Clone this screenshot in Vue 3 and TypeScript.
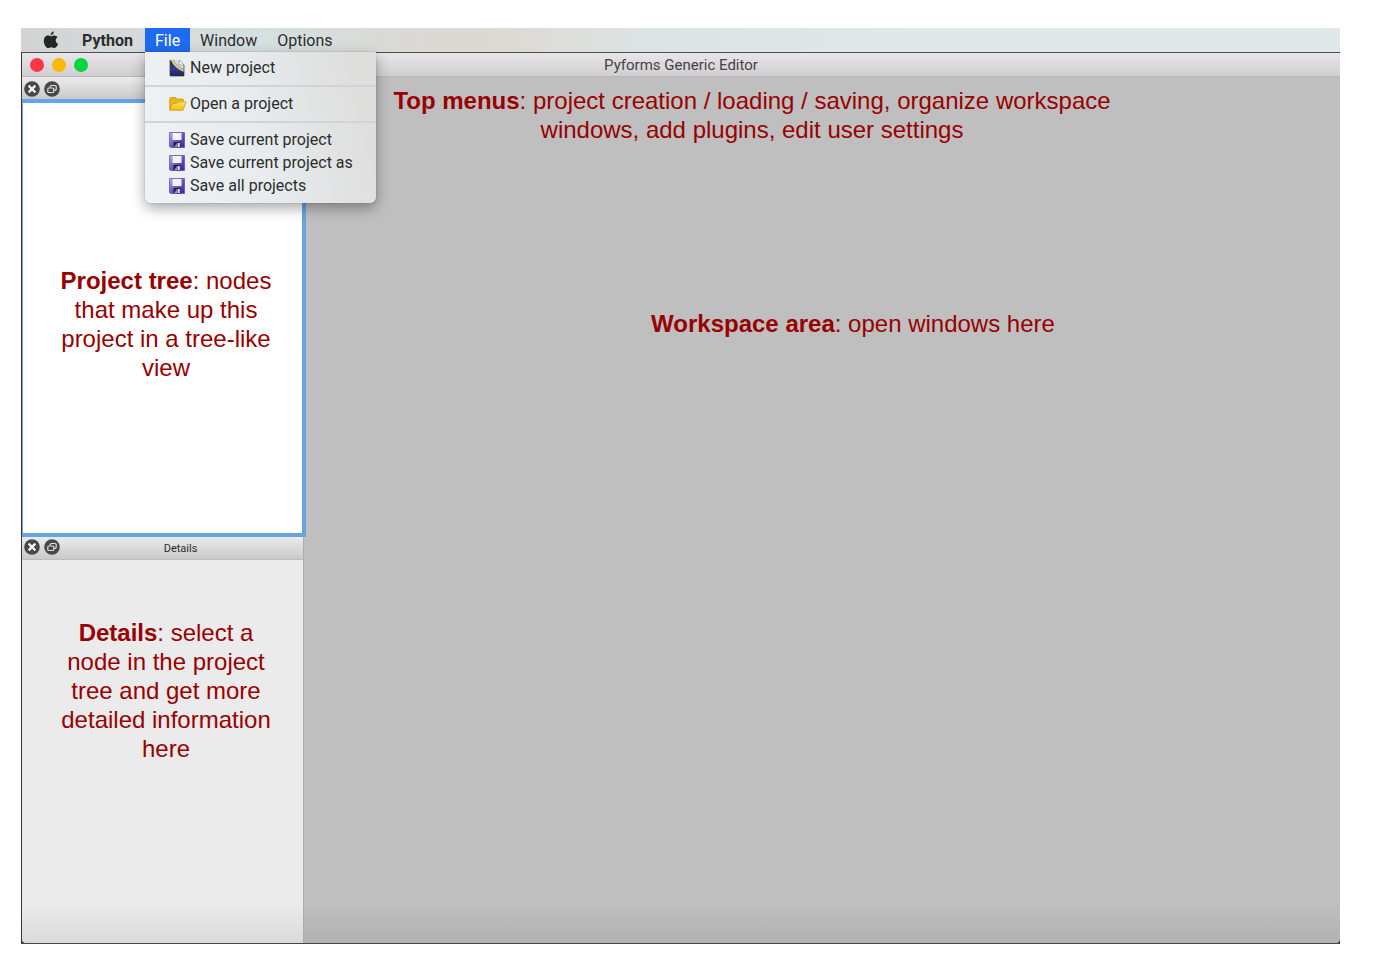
<script setup lang="ts">
import { ref } from 'vue'

type IconName = 'new' | 'open' | 'save'
interface MenuEntry { label: string; icon: IconName }

const menus: string[] = ['File', 'Window', 'Options']
const openMenu = ref<string>('File')
const groups: MenuEntry[][] = [
  [{ label: 'New project', icon: 'new' }],
  [{ label: 'Open a project', icon: 'open' }],
  [
    { label: 'Save current project', icon: 'save' },
    { label: 'Save current project as', icon: 'save' },
    { label: 'Save all projects', icon: 'save' },
  ],
]
const docks: string[] = ['tree', 'details']
</script>

<template>
  <div class="screen">
    <svg class="defs" aria-hidden="true">
      <defs>
        <linearGradient id="gNew" x1="0" y1="0" x2="0" y2="1"><stop offset="0" stop-color="#27304a" /><stop offset=".55" stop-color="#2d3a9c" /><stop offset="1" stop-color="#24243c" /></linearGradient>
        <linearGradient id="gFolder" x1="0" y1="0" x2="0" y2="1"><stop offset="0" stop-color="#ffe868" /><stop offset="1" stop-color="#f2b90f" /></linearGradient>
        <linearGradient id="gDisk" x1="0" y1="0" x2="1" y2="1"><stop offset="0" stop-color="#b9aef8" /><stop offset=".5" stop-color="#6a56cf" /><stop offset="1" stop-color="#35249c" /></linearGradient>
      </defs>
    </svg>

    <nav class="menubar">
      <button class="apple" aria-label="Apple menu">
        <svg width="16" height="18" viewBox="0 0 16 18"><path fill="#252727" d="M10.900 0.500c.1 1.900-1.500 3.700-3.300 3.600-.2-1.800 1.500-3.500 3.300-3.600zM8.100 5.300c.9 0 1.700-.8 3.200-.8 1.300 0 2.600.7 3.300 1.800-2.800 1.700-2.300 5.300.5 6.500-.6 1.700-2 4.200-3.500 4.200-1.200 0-1.700-.8-3.200-.8s-2 .8-3.200.8C3.100 17 .8 13.300.8 9.900c0-3.300 2-5.300 4.200-5.300 1.400 0 2.300.7 3.100.7z" /></svg>
      </button>
      <button class="app-name">Python</button>
      <div v-for="m in menus" :key="m" class="menu">
        <button :class="['menu-title', { active: openMenu === m }]" @click="openMenu = m">{{ m }}</button>
        <div v-if="m === 'File' && openMenu === 'File'" class="popup">
          <div v-for="(group, i) in groups" :key="i" class="group">
            <button v-for="e in group" :key="e.label" class="entry">
              <svg v-if="e.icon === 'new'" width="16" height="18" viewBox="0 0 16 18">
                <path d="M1 .5h10l4 5V17H1z" fill="#dededa" />
                <path d="M1 1.500h2c2 5 6 8.500 12 11V17H1z" fill="url(#gNew)" />
                <path d="M2.800 1c2 5 6 8.500 12.200 11" fill="none" stroke="#e5cf67" stroke-width="1.800" />
                <path d="M4.500 1c2 4 5 7 10.500 9.500" fill="none" stroke="#77786f" stroke-width=".7" />
                <path d="M10 1v5h5z" fill="#fafafa" stroke="#8d8d8d" stroke-width=".7" />
                <path d="M1 1v16h14V6" fill="none" stroke="#373943" stroke-width=".7" />
              </svg>
              <svg v-else-if="e.icon === 'open'" width="18" height="16" viewBox="0 0 18 16">
                <path d="M.7 14V2.500l1.500-1h4.500l1 1.500h6.500v4" fill="#edb719" stroke="#cf9112" stroke-width=".8" />
                <path d="M.8 14.300 3.500 7.500l4.500-.2 1-1.500h8l-3 8.500z" fill="url(#gFolder)" stroke="#d49a14" stroke-width=".8" />
              </svg>
              <svg v-else width="16" height="16" viewBox="0 0 16 16">
                <path d="M.5.5h15v15h-14l-1-1z" fill="url(#gDisk)" stroke="#594bb4" stroke-width=".7" />
                <path d="M3.500 1h9v7h-9z" fill="#f3f3fa" />
                <path d="M4.500 10h7v5.500h-7z" fill="#25243d" />
                <path d="M8.500 11h2.300v4H8.500z" fill="#dcdce7" />
                <path d="M5 15.500 8 11v4.500z" fill="#8e91a4" />
              </svg>
              <span>{{ e.label }}</span>
            </button>
          </div>
        </div>
      </div>
    </nav>

    <section class="window">
      <header class="titlebar">
        <div class="lights">
          <button class="light red" aria-label="Close"></button>
          <button class="light yellow" aria-label="Minimize"></button>
          <button class="light green" aria-label="Zoom"></button>
        </div>
        <h1>Pyforms Generic Editor</h1>
      </header>

      <div class="body">
        <aside class="sidebar">
          <section v-for="d in docks" :key="d" :class="['dock', d]">
            <header class="dock-head">
              <button class="dock-btn" aria-label="Close panel">
                <svg width="16" height="16" viewBox="0 0 16 16"><circle cx="8" cy="8" r="7.800" fill="#484848" /><path d="M5.500 5.500l5 5M10.500 5.500l-5 5" stroke="#f4f4f4" stroke-width="2.400" stroke-linecap="square" /></svg>
              </button>
              <button class="dock-btn" aria-label="Float panel">
                <svg width="16" height="16" viewBox="0 0 16 16"><circle cx="8" cy="8" r="7.800" fill="#484848" /><g fill="none" stroke="#dedede" stroke-width="1.200"><rect x="3.800" y="7" width="6" height="4.500" rx="1" /><path d="M6.200 6.500V5.300l1-.8h4l1 .8v3.200l-1 .9h-1" /></g></svg>
              </button>
              <h2 v-if="d === 'details'">Details</h2>
            </header>
            <div class="dock-body">
              <p v-if="d === 'tree'" class="note"><b>Project tree</b>: nodes that make up this project in a tree-like view</p>
              <p v-else class="note"><b>Details</b>: select a node in the project tree and get more detailed information here</p>
            </div>
          </section>
        </aside>
        <main class="workspace">
          <p class="note top-note"><b>Top menus</b>: project creation / loading / saving, organize workspace windows, add plugins, edit user settings</p>
          <p class="note area-note"><b>Workspace area</b>: open windows here</p>
        </main>
      </div>
    </section>
  </div>
</template>

<style>
body { background: #fff; }
</style>

<style scoped>
* { box-sizing: border-box; }
.screen {
  display: flex;
  flex-direction: column;
  min-height: 100vh;
  padding: 28px 36px 29px 21px;
  font-family: Roboto, "Liberation Sans", sans-serif;
  color: #2b2d2e;
}
.defs { position: absolute; width: 0; height: 0; }
button {
  margin: 0;
  padding: 0;
  border: 0;
  background: none;
  font: inherit;
  color: inherit;
}
.menubar {
  display: flex;
  height: 25px;
  padding-left: 22px;
  border-bottom: 1px solid #4b4e50;
  background: linear-gradient(90deg, #d3d3d3 0, #d6dadb 120px, #d4e0e1 240px, #dadad6 370px, #ddd9d3 480px, #dce3e3 620px, #e0e8ea 900px, #e0e8ea 100%);
  font-size: 16px;
  line-height: 24px;
}
.apple { display: flex; width: 16px; padding-top: 3px; }
.app-name { width: 53px; margin: 0 11px 0 22px; padding-top: 1px; font-weight: 700; white-space: nowrap; }
.menu { position: relative; }
.menu-title { height: 24px; padding: 1px 10px 0; }
.menu-title.active { background: #1f6bef; color: #fff; }
.popup {
  position: absolute;
  z-index: 2;
  top: 24px;
  left: 0;
  width: 231px;
  padding: 4px 0 6px;
  border-radius: 0 0 6px 6px;
  background: linear-gradient(75deg, #eff3f5 0, #e7ebed 50%, #dededd 90%);
  box-shadow: 0 5px 14px rgba(0, 0, 0, 0.35), 0 0 1px rgba(0, 0, 0, 0.5);
}
.group + .group { margin-top: 6px; padding-top: 5px; border-top: 2px solid #d1d4d6; }
.entry {
  display: flex;
  align-items: center;
  width: 100%;
  height: 23px;
  padding-left: 24px;
  white-space: nowrap;
}
.entry svg { flex: none; }
.entry span { position: absolute; left: 45px; padding-top: 1px; }
.window {
  display: flex;
  flex: 1;
  flex-direction: column;
  border-bottom: 1px solid #474747;
  border-left: 1px solid #383838;
  background: #222;
}
.titlebar {
  display: grid;
  grid-template-columns: 1fr auto 1fr;
  align-items: center;
  height: 24px;
  border-bottom: 1px solid #bab7ba;
  background: linear-gradient(#e9e6e9, #d1ced1);
}
.lights { display: flex; gap: 8px; padding-left: 8px; }
.light { width: 14px; height: 14px; border-radius: 50%; }
.red { background: #fc3846; }
.yellow { background: #fdb906; }
.green { background: #05d541; }
h1 { margin: 0; padding-top: 1px; font-size: 15px; font-weight: 400; line-height: 20px; color: #454345; }
.body {
  display: flex;
  flex: 1;
  border-radius: 0 0 4px 4px;
  background: #bfbfbf;
}
.sidebar {
  display: flex;
  flex: none;
  flex-direction: column;
  width: 282px;
  border-right: 1px solid #acacac;
  border-radius: 0 0 0 4px;
  background: #ebebeb;
}
.dock { display: flex; flex-direction: column; }
.dock.details { flex: 1; }
.dock-head {
  position: relative;
  display: flex;
  gap: 4px;
  height: 22px;
  padding: 4px 0 0 2px;
  background: linear-gradient(#ececec, #c9c9c9);
}
.details .dock-head { height: 23px; padding-top: 2px; border-bottom: 1px solid #bdbdbd; }
.dock-btn { width: 16px; height: 16px; }
.dock-btn svg { display: block; }
h2 {
  position: absolute;
  inset: 0 0 0 36px;
  margin: 0;
  font-size: 11px;
  font-weight: 400;
  line-height: 23px;
  text-align: center;
}
.tree .dock-body {
  position: relative;
  height: 438px;
  margin-right: -3px;
  padding-top: 163px;
  border: solid #67a4e5;
  border-width: 4px 4px 4px 1px;
  background: #fff;
}
.details .dock-body {
  flex: 1;
  padding-top: 58px;
  border-radius: 0 0 0 4px;
  background: linear-gradient(transparent calc(100% - 40px), rgba(0, 0, 0, 0.07));
}
.note {
  margin: 0;
  font-family: "Liberation Sans", Arial, sans-serif;
  font-size: 24px;
  line-height: 29px;
  text-align: center;
  color: #980000;
}
.dock .note { width: 226px; margin-left: 31px; }
.tree .note { margin-left: 30px; }
.workspace {
  flex: 1;
  padding: 9px 24px 0 78px;
  border-radius: 0 0 4px 0;
  background: linear-gradient(transparent calc(100% - 40px), rgba(0, 0, 0, 0.07));
}
.top-note { max-width: 740px; }
.area-note { max-width: 740px; margin: 165px 0 0 101px; }
</style>
